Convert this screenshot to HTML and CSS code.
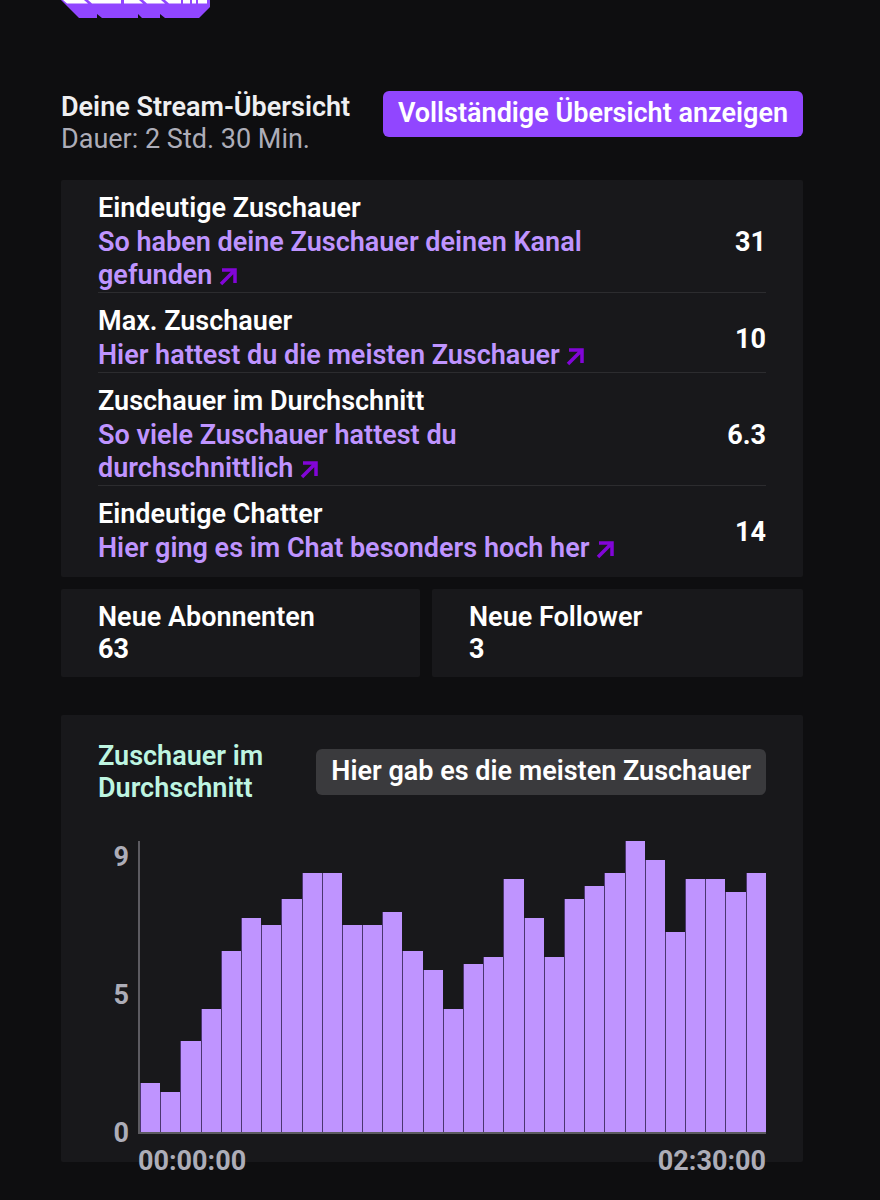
FILE: index.html
```
<!DOCTYPE html>
<html lang="de">
<head>
<meta charset="utf-8">
<meta name="viewport" content="width=device-width, initial-scale=1">
<title>Stream-Übersicht</title>
<link rel="stylesheet" href="styles.css">
</head>
<body>
<main class="page">
  <div class="brand">
    <svg class="brand-logo" width="150" height="18" viewBox="0 0 150 18" aria-hidden="true">
      <path fill="#9146ff" d="M0 0H149V7L138 18H104L99 14V18H81L77 14V18H41L36 14V18H18Z"/>
      <path fill="#fff" d="M2 0H23L27 3.500H6ZM27 0H60V3.500H31ZM63 0H78L82 3.500H63ZM82 0H100L104 3.500H86ZM104 0H120V3.500H108ZM122 0H129V3.500H122ZM131 0H135V3.500H131ZM137 0H146V3.500H137Z"/>
    </svg>
  </div>

  <header class="overview">
    <div class="overview-text">
      <h1 class="overview-title">Deine Stream-Übersicht</h1>
      <p class="overview-duration">Dauer: 2 Std. 30 Min.</p>
    </div>
    <button class="button button-primary" type="button">Vollständige Übersicht anzeigen</button>
  </header>

  <section class="card metrics">
    <table class="metrics-table">
      <tbody>
        <tr>
          <th class="metric-name" scope="row">Eindeutige Zuschauer
            <a class="metric-link" href="#">So haben deine Zuschauer deinen Kanal gefunden <svg class="arrow" viewBox="0 0 18 18" aria-hidden="true"><path d="M3 2H16V15M16 2L2 16"/></svg></a></th>
          <td class="metric-value">31</td>
        </tr>
        <tr>
          <th class="metric-name" scope="row">Max. Zuschauer
            <a class="metric-link" href="#">Hier hattest du die meisten Zuschauer <svg class="arrow" viewBox="0 0 18 18" aria-hidden="true"><path d="M3 2H16V15M16 2L2 16"/></svg></a></th>
          <td class="metric-value">10</td>
        </tr>
        <tr>
          <th class="metric-name" scope="row">Zuschauer im Durchschnitt
            <a class="metric-link" href="#">So viele Zuschauer hattest du durchschnittlich <svg class="arrow" viewBox="0 0 18 18" aria-hidden="true"><path d="M3 2H16V15M16 2L2 16"/></svg></a></th>
          <td class="metric-value">6.3</td>
        </tr>
        <tr>
          <th class="metric-name" scope="row">Eindeutige Chatter
            <a class="metric-link" href="#">Hier ging es im Chat besonders hoch her <svg class="arrow" viewBox="0 0 18 18" aria-hidden="true"><path d="M3 2H16V15M16 2L2 16"/></svg></a></th>
          <td class="metric-value">14</td>
        </tr>
      </tbody>
    </table>
  </section>

  <div class="stats">
    <section class="card stat">
      <h2 class="stat-label">Neue Abonnenten</h2>
      <p class="stat-value">63</p>
    </section>
    <section class="card stat">
      <h2 class="stat-label">Neue Follower</h2>
      <p class="stat-value">3</p>
    </section>
  </div>

  <section class="card viewers">
    <div class="viewers-header">
      <h2 class="viewers-title">Zuschauer im Durchschnitt</h2>
      <button class="button button-secondary" type="button">Hier gab es die meisten Zuschauer</button>
    </div>
    <div class="chart">
      <div class="y-axis"><span>9</span><span>5</span><span>0</span></div>
      <div class="plot">
        <div class="bar" style="height:16.8%"></div>
        <div class="bar" style="height:13.6%"></div>
        <div class="bar" style="height:31.3%"></div>
        <div class="bar" style="height:42.4%"></div>
        <div class="bar" style="height:62.2%"></div>
        <div class="bar" style="height:73.4%"></div>
        <div class="bar" style="height:71.1%"></div>
        <div class="bar" style="height:80%"></div>
        <div class="bar" style="height:89%"></div>
        <div class="bar" style="height:89%"></div>
        <div class="bar" style="height:71.1%"></div>
        <div class="bar" style="height:71.1%"></div>
        <div class="bar" style="height:75.6%"></div>
        <div class="bar" style="height:62.2%"></div>
        <div class="bar" style="height:55.6%"></div>
        <div class="bar" style="height:42.4%"></div>
        <div class="bar" style="height:57.8%"></div>
        <div class="bar" style="height:60%"></div>
        <div class="bar" style="height:86.8%"></div>
        <div class="bar" style="height:73.4%"></div>
        <div class="bar" style="height:60%"></div>
        <div class="bar" style="height:80%"></div>
        <div class="bar" style="height:84.5%"></div>
        <div class="bar" style="height:89%"></div>
        <div class="bar" style="height:100%"></div>
        <div class="bar" style="height:93.5%"></div>
        <div class="bar" style="height:68.9%"></div>
        <div class="bar" style="height:86.8%"></div>
        <div class="bar" style="height:86.8%"></div>
        <div class="bar" style="height:82.4%"></div>
        <div class="bar" style="height:89%"></div>
      </div>
      <div class="x-axis"><span>00:00:00</span><span>02:30:00</span></div>
    </div>
  </section>
</main>
</body>
</html>
```
FILE: styles.css
```
* {
  box-sizing: border-box;
}

body {
  margin: 0;
  background: #0e0e10;
  color: #fff;
  font-family: Roboto, "Liberation Sans", sans-serif;
  font-size: 27px;
  font-weight: 600;
  line-height: 32px;
}

h1,
h2,
p {
  margin: 0;
  font-size: inherit;
  font-weight: inherit;
}

.page {
  padding: 0 77px 37px 61px;
}

.brand-logo {
  display: block;
}

.overview {
  display: flex;
  justify-content: space-between;
  align-items: flex-start;
  gap: 24px;
  padding: 73px 0 25px;
}

.overview-title {
  color: #efeff1;
}

.overview-duration {
  color: #adadb8;
  font-weight: 400;
}

.button {
  flex: none;
  border: 0;
  border-radius: 6px;
  padding: 6px 15px 8px;
  color: #fff;
  font: inherit;
  white-space: nowrap;
}

.button-primary {
  background: #9146ff;
}

.button-secondary {
  background: #3a3a3d;
}

.card {
  background: #18181b;
  border-radius: 2px;
}

.metrics {
  padding: 0 37px 12px;
}

.metrics-table {
  width: 100%;
  border-collapse: separate;
  border-spacing: 0;
}

.metric-name,
.metric-value {
  padding: 12px 0 0;
  border-bottom: 1px solid #2c2c2f;
}

tr:last-child > .metric-name,
tr:last-child > .metric-value {
  border-bottom: 0;
}

.metric-name {
  width: 80%;
  font-weight: 600;
  text-align: left;
}

.metric-link {
  display: block;
  margin-top: 2px;
  color: #bf94ff;
  line-height: 33px;
  text-decoration: none;
}

.arrow {
  width: 18px;
  height: 18px;
  vertical-align: -2px;
  fill: none;
  stroke: #8205d8;
  stroke-width: 3.5;
}

.metric-value {
  font-weight: 700;
  text-align: right;
}

.stats {
  display: grid;
  grid-template-columns: 1fr 1fr;
  margin: 12px 0 38px;
}

.stat {
  padding: 12px 37px;
}

.stat:first-child {
  margin-right: 12px;
}

.stat-value {
  font-weight: 700;
}

.viewers {
  padding: 25px 37px 0;
}

.viewers-header {
  display: flex;
  justify-content: space-between;
  align-items: center;
  gap: 24px;
}

.viewers-title {
  color: #bef5e1;
}

.chart {
  display: grid;
  grid-template-columns: 31px 1fr;
  column-gap: 9px;
  margin-top: 37px;
  color: #adadb8;
  font-weight: 700;
}

.y-axis {
  display: flex;
  flex-direction: column;
  justify-content: space-between;
  margin-bottom: -15px;
  text-align: right;
}

.plot {
  display: flex;
  align-items: flex-end;
  height: 293px;
  border-left: 2px solid #5c5b61;
  border-bottom: 2px solid #5c5b61;
}

.bar {
  flex: 1;
  border-left: 1px solid #4b3670;
  background: #bf94ff;
}

/* The time labels hang over the lower edge of the card. */
.x-axis {
  grid-column: 2;
  display: flex;
  justify-content: space-between;
  padding-top: 11px;
  margin-bottom: -15px;
}
```
